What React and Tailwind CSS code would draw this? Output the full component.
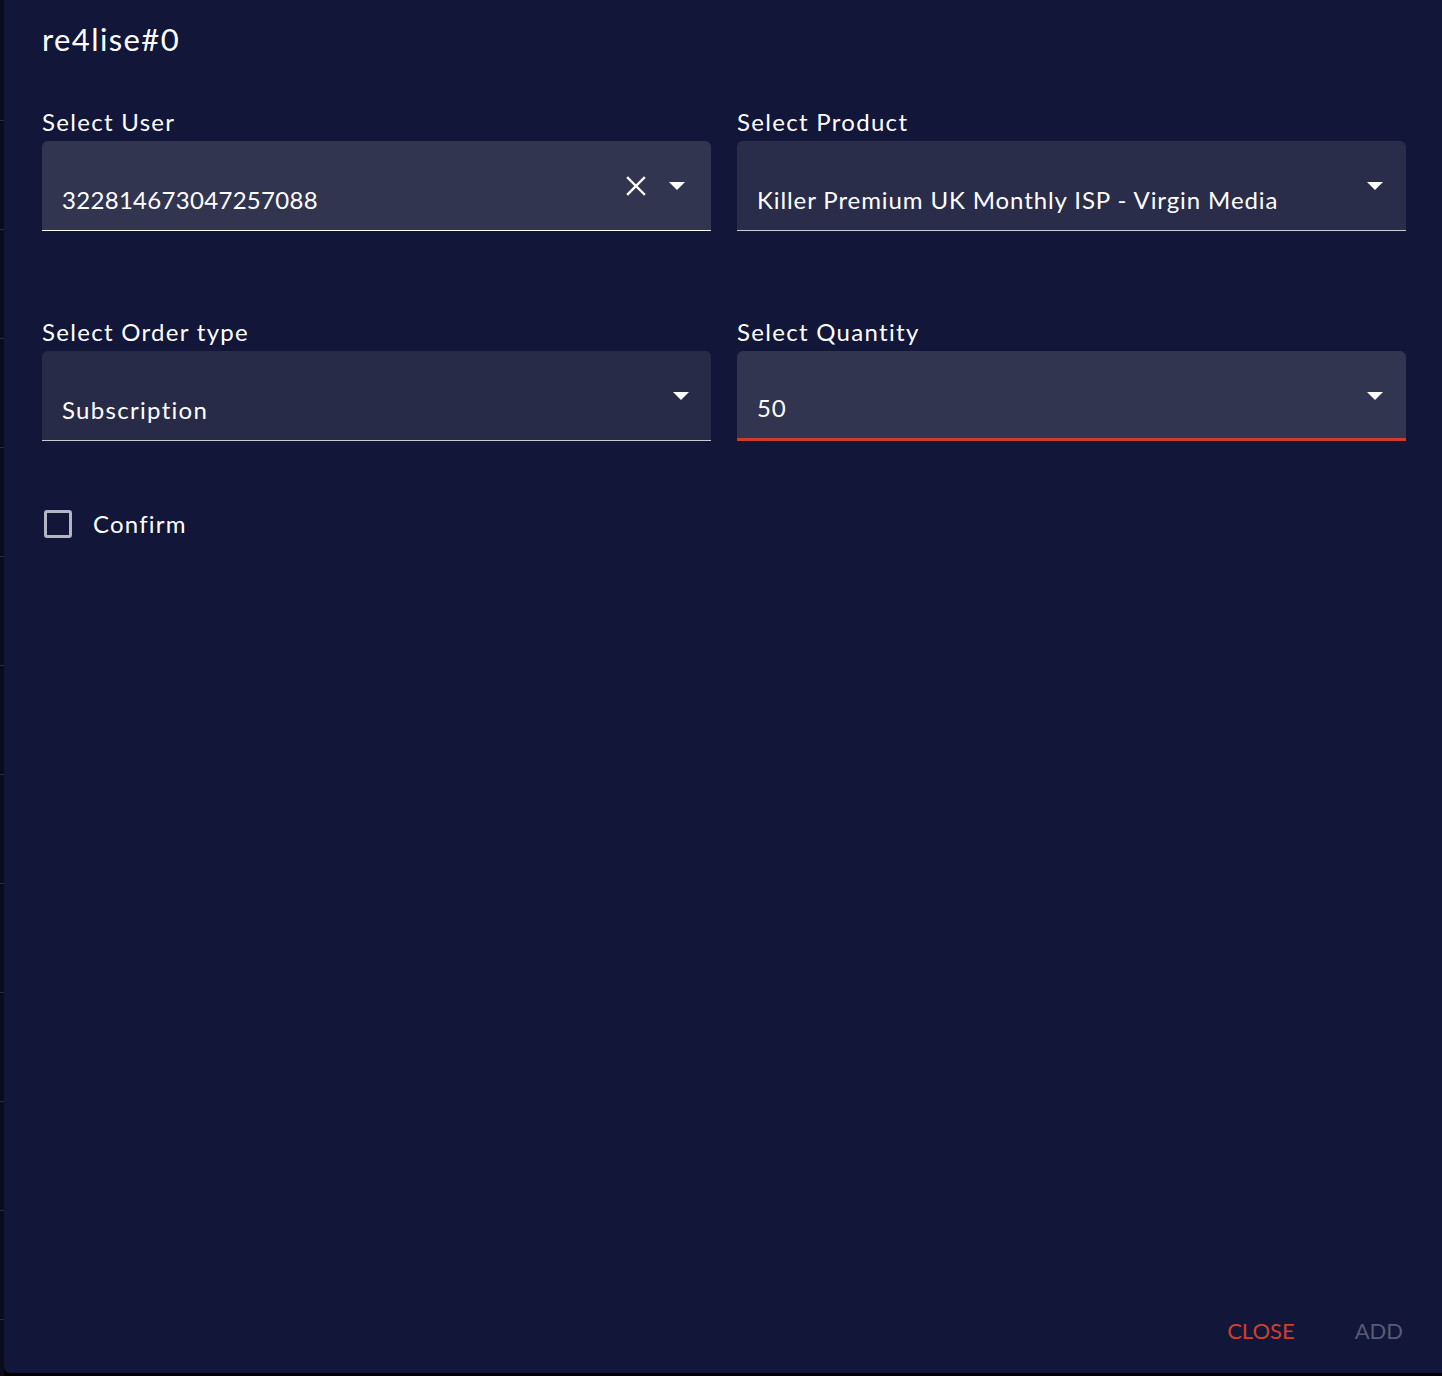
const Arrow = () => (
  <svg width="16" height="8" viewBox="0 0 16 8" className="shrink-0">
    <path d="M0 0h16L8 8z" fill="#ffffff" />
  </svg>
);

const Label = ({ children }) => (
  <div className="text-[24px] leading-[30px] tracking-[1.3px] text-white mb-[4px]">{children}</div>
);

const Field = ({
  label,
  value,
  line = "border-b border-[#c9cad3]",
  bg = "bg-[#2a2d4a]",
  arrowPos = "right-[23px]",
  track = "tracking-[0.9px]",
  clearable,
}) => (
  <div className="flex flex-col">
    <Label>{label}</Label>
    <div className={`h-[90px] rounded-t-[6px] ${bg} ${line} flex items-end pl-[20px] relative`}>
      <span className={`text-[24px] leading-[30px] ${track} text-white pb-[15px]`}>{value}</span>
      {clearable && (
        <svg width="20" height="20" viewBox="0 0 20 20" className="absolute right-[65px] top-[35px]">
          <path d="M2 2L18 18M18 2L2 18" stroke="#ffffff" strokeWidth="2.4" strokeLinecap="square" />
        </svg>
      )}
      <div className={`absolute ${arrowPos} top-[41px] flex`}>
        <Arrow />
      </div>
    </div>
  </div>
);

export default function App() {
  return (
    <div className="w-[1442px] h-[1376px] bg-black flex" style={{ fontFamily: '"Lato", "Open Sans", sans-serif' }}>
      <div className="w-[4px] h-full bg-[#0a0c1e] flex flex-col pt-[120px] gap-[108px]">
        {Array.from({ length: 12 }).map((_, i) => (
          <div key={i} className="h-px bg-[#2a2c3a]" />
        ))}
      </div>
      <div className="flex-1 h-[1373px] bg-[#121638] rounded-bl-[6px] pl-[38px] pr-[36px] flex flex-col">
        <h1 className="text-[31px] leading-[36px] tracking-[1.4px] text-white pt-[21px]">re4lise#0</h1>
        <div className="grid grid-cols-2 gap-x-[26px] mt-[50px] gap-y-[86px]">
          <Field
            label="Select User"
            value="322814673047257088"
            bg="bg-[#32354f]"
            line="border-b border-white"
            arrowPos="right-[26px]"
            track="tracking-[0.3px]"
            clearable
          />
          <Field label="Select Product" value="Killer Premium UK Monthly ISP - Virgin Media" />
          <Field
            label="Select Order type"
            value="Subscription"
            bg="bg-[#282b48]"
            arrowPos="right-[22px]"
            track="tracking-[1.3px]"
          />
          <Field
            label="Select Quantity"
            value="50"
            bg="bg-[#32354f]"
            line="border-b-[3px] border-[#d03c2c]"
          />
        </div>
        <label className="flex items-center gap-[21px] mt-[68px] ml-[2px]">
          <span className="w-[28px] h-[28px] rounded-[3px] border-[3px] border-[#b3b5c2]" />
          <span className="text-[24px] leading-[30px] tracking-[1.2px] text-white">Confirm</span>
        </label>
        <div className="flex-1" />
        <div className="flex justify-end items-center gap-[60px] pb-[28px] pr-[3px]">
          <button className="text-[22px] leading-[28px] text-[#d0402c] uppercase">Close</button>
          <button className="text-[22px] leading-[28px] text-[#585b77] uppercase">Add</button>
        </div>
      </div>
    </div>
  );
}
